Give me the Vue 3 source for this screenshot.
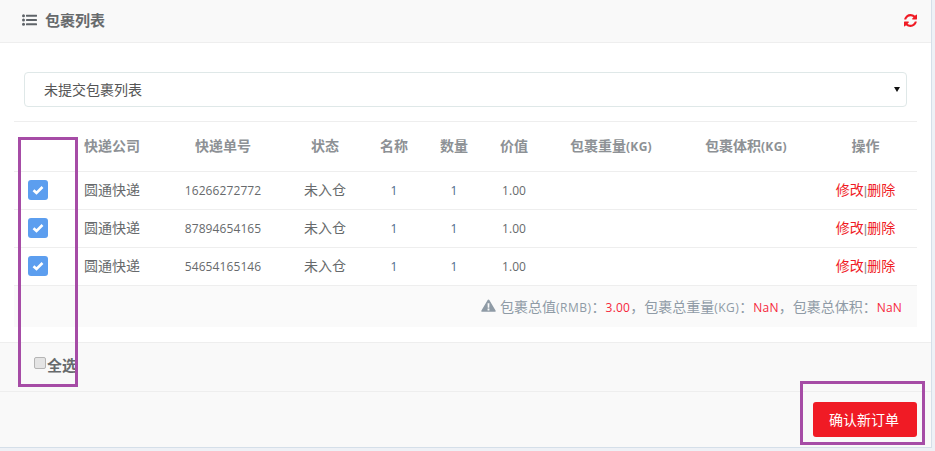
<script setup>
const columns = ['快递公司', '快递单号', '状态', '名称', '数量', '价值']
const rows = [
  { id: 1, no: '16266272772' },
  { id: 2, no: '87894654165' },
  { id: 3, no: '54654165146' },
]
</script>

<template>
  <div class="page">
    <section class="panel">
      <header class="head">
        <div class="title">
          <svg class="list-icon" viewBox="0 0 15 12" aria-hidden="true">
            <g fill="#5f6469">
              <circle cx="1.5" cy="1.7" r="1.5" />
              <circle cx="1.5" cy="6" r="1.5" />
              <circle cx="1.5" cy="10.3" r="1.5" />
              <rect x="4" y="0.7" width="11" height="2" rx=".4" />
              <rect x="4" y="5" width="11" height="2" rx=".4" />
              <rect x="4" y="9.3" width="11" height="2" rx=".4" />
            </g>
          </svg>
          <span>包裹列表</span>
        </div>
        <svg class="refresh" viewBox="0 0 1536 1536" aria-hidden="true">
          <path fill="#f01b25" d="M1511 928q0 5-1 7-64 268-268 434.500t-478 166.500q-146 0-282.500-55t-243.500-157l-129 129q-19 19-45 19t-45-19-19-45v-448q0-26 19-45t45-19h448q26 0 45 19t19 45-19 45l-137 137q71 66 161 102t187 36q134 0 250-65t186-179q11-17 53-117 8-23 30-23h192q13 0 22.500 9.500t9.500 22.500zM1536 128v448q0 26-19 45t-45 19h-448q-26 0-45-19t-19-45 19-45l138-138q-148-137-349-137-134 0-250 65t-186 179q-11 17-53 117-8 23-30 23h-199q-13 0-22.500-9.500t-9.500-22.500v-7q65-268 270-434.500t480-166.500q146 0 284 55.500t245 156.500l130-129q19-19 45-19t45 19 19 45z" />
        </svg>
      </header>

      <div class="body">
        <div class="select">
          <span class="select-text">未提交包裹列表</span>
          <span class="arrow"></span>
        </div>

        <div class="table">
          <div class="row head-row">
            <div></div>
            <div v-for="c in columns" :key="c">{{ c }}</div>
            <div>包裹重量<small>(KG)</small></div>
            <div>包裹体积<small>(KG)</small></div>
            <div>操作</div>
          </div>
          <div v-for="r in rows" :key="r.id" class="row data-row">
            <div class="check-cell">
              <span class="check">
                <svg viewBox="0 0 12 10" aria-hidden="true">
                  <path d="M1.500 5.200 4.500 8 10.500 2" fill="none" stroke="#fff" stroke-width="2.600" />
                </svg>
              </span>
            </div>
            <div class="cjk">圆通快递</div>
            <div class="num grey">{{ r.no }}</div>
            <div class="cjk">未入仓</div>
            <div class="num blue">1</div>
            <div class="num blue">1</div>
            <div class="num grey">1.00</div>
            <div></div>
            <div></div>
            <div class="cjk ops">修改<i>|</i>删除</div>
          </div>
          <div class="summary">
            <svg class="warn" viewBox="0 0 16 14" aria-hidden="true">
              <path fill="#8f9ba6" fill-rule="evenodd" d="M8 .5c.4 0 .7.2.9.5l6.700 11.300c.4.700 0 1.400-.8 1.400H1.200c-.8 0-1.200-.7-.8-1.400L7.100 1c.2-.3.5-.5.900-.5zM7 4.500l.2 4.800h1.600L9 4.500zM7 10.300v2h2v-2z" />
            </svg>
            <span>包裹总值<em>(RMB)</em>：<b>3.00</b>，包裹总重量<em>(KG)</em>：<b>NaN</b>，包裹总体积：<b>NaN</b></span>
          </div>
        </div>
      </div>

      <div class="select-all">
        <span class="native-box"></span><span class="all-text">全选</span>
      </div>

      <footer class="foot">
        <button class="confirm" type="button">确认新订单</button>
      </footer>
    </section>

    <div class="mark mark-left"></div>
    <div class="mark mark-right"></div>
  </div>
</template>

<style scoped>
.page {
  position: relative;
  width: 935px;
  height: 451px;
  overflow: hidden;
  background: #eef1f6;
  font-family: "Open Sans", "Noto Sans CJK SC", sans-serif;
  font-size: 14px;
  color: #676a6c;
}
.panel {
  width: 932px;
  height: 448px;
  box-sizing: border-box;
  background: #fff;
  border-right: 1px solid #d5dfe9;
  border-bottom: 1px solid #d5dfe9;
  display: flex;
  flex-direction: column;
}
.head {
  height: 43px;
  box-sizing: border-box;
  flex: none;
  display: flex;
  align-items: center;
  justify-content: space-between;
  padding: 0 14px 2px 22px;
  background: #f9f9f9;
  border-bottom: 1px solid #eee;
}
.title {
  display: flex;
  align-items: center;
  gap: 8px;
  font-weight: 700;
  font-size: 15px;
  color: #676a6c;
}
.title span {
  padding-bottom: 2px;
}
.list-icon {
  width: 15px;
  height: 12px;
}
.refresh {
  width: 13px;
  height: 13px;
}
.body {
  flex: none;
  height: 300px;
  box-sizing: border-box;
  padding: 29px 14px 0;
  border-bottom: 1px solid #eee;
}
.select {
  margin: 0 10px 14px;
  height: 35px;
  box-sizing: border-box;
  padding: 0 6px 0 19px;
  border: 1px solid #dfe8e8;
  border-radius: 4px;
  display: flex;
  align-items: center;
  justify-content: space-between;
  color: #555;
}
.select-text {
  padding-bottom: 2px;
}
.arrow {
  width: 0;
  height: 0;
  border-left: 3.500px solid transparent;
  border-right: 3.500px solid transparent;
  border-top: 5px solid #111;
}
.table {
  border-top: 1px solid #eee;
}
.row {
  display: grid;
  grid-template-columns: 50px 96px 126px 78px 60px 60px 60px 134px 136px 103px;
  align-items: center;
  text-align: center;
  box-sizing: border-box;
  border-bottom: 1px solid #eee;
}
.head-row {
  height: 50px;
  padding-bottom: 4px;
  font-weight: 700;
  color: #8d9195;
}
.head-row small {
  font-size: 12px;
  font-weight: 700;
  letter-spacing: .3px;
}
.data-row {
  height: 38px;
}
.cjk {
  padding-bottom: 4px;
}
.num {
  font-size: 12px;
  letter-spacing: .1px;
}
.grey {
  color: #676a6c;
}
.blue {
  color: #4f6a8a;
}
.check-cell {
  padding-bottom: 2px;
}
.check {
  width: 20px;
  height: 20px;
  margin-left: -3px;
  border-radius: 3px;
  background: #5c9eef;
  display: inline-flex;
  align-items: center;
  justify-content: center;
  vertical-align: middle;
}
.check svg {
  width: 12px;
  height: 10px;
}
.ops {
  color: #f01b25;
}
.ops i {
  font-family: "Liberation Sans", sans-serif;
  font-style: normal;
  font-size: 13px;
  color: #888;
}
.summary {
  height: 41px;
  box-sizing: border-box;
  padding: 0 15px 2px 0;
  background: #fafafa;
  display: flex;
  align-items: center;
  justify-content: flex-end;
  gap: 4px;
  color: #8f9ba6;
  font-size: 14px;
}
.warn {
  width: 15px;
  height: 13px;
}
.summary em {
  font-style: normal;
  font-size: 12px;
  letter-spacing: .5px;
}
.summary b {
  font-weight: 400;
  font-size: 12px;
  letter-spacing: .2px;
  color: #f6273c;
}
.select-all {
  flex: none;
  height: 49px;
  box-sizing: border-box;
  padding: 12px 0 0 34px;
  background: #f9f9f9;
  border-bottom: 1px solid #eee;
  display: flex;
  align-items: flex-start;
}
.native-box {
  width: 10px;
  height: 10px;
  margin-top: 2px;
  border: 1px solid #b5b5b5;
  border-radius: 2px;
  background: #e4e4e4;
}
.all-text {
  margin-left: 1px;
  font-weight: 700;
  font-size: 15px;
  line-height: 20px;
  color: #676a6c;
}
.foot {
  flex: 1;
  display: flex;
  align-items: center;
  justify-content: flex-end;
  padding: 0 14px 0 0;
  background: #f9f9f9;
}
.confirm {
  width: 104px;
  height: 35px;
  border: 0;
  border-radius: 3px;
  background: #f01b25;
  color: #fff;
  font: inherit;
  padding: 0 2px 2px 0;
}
.mark {
  position: absolute;
  box-sizing: border-box;
  border: 3px solid #a64ca6;
}
.mark-left {
  left: 18px;
  top: 137px;
  width: 60px;
  height: 250px;
}
.mark-right {
  left: 800px;
  top: 381px;
  width: 125px;
  height: 64px;
}
</style>
